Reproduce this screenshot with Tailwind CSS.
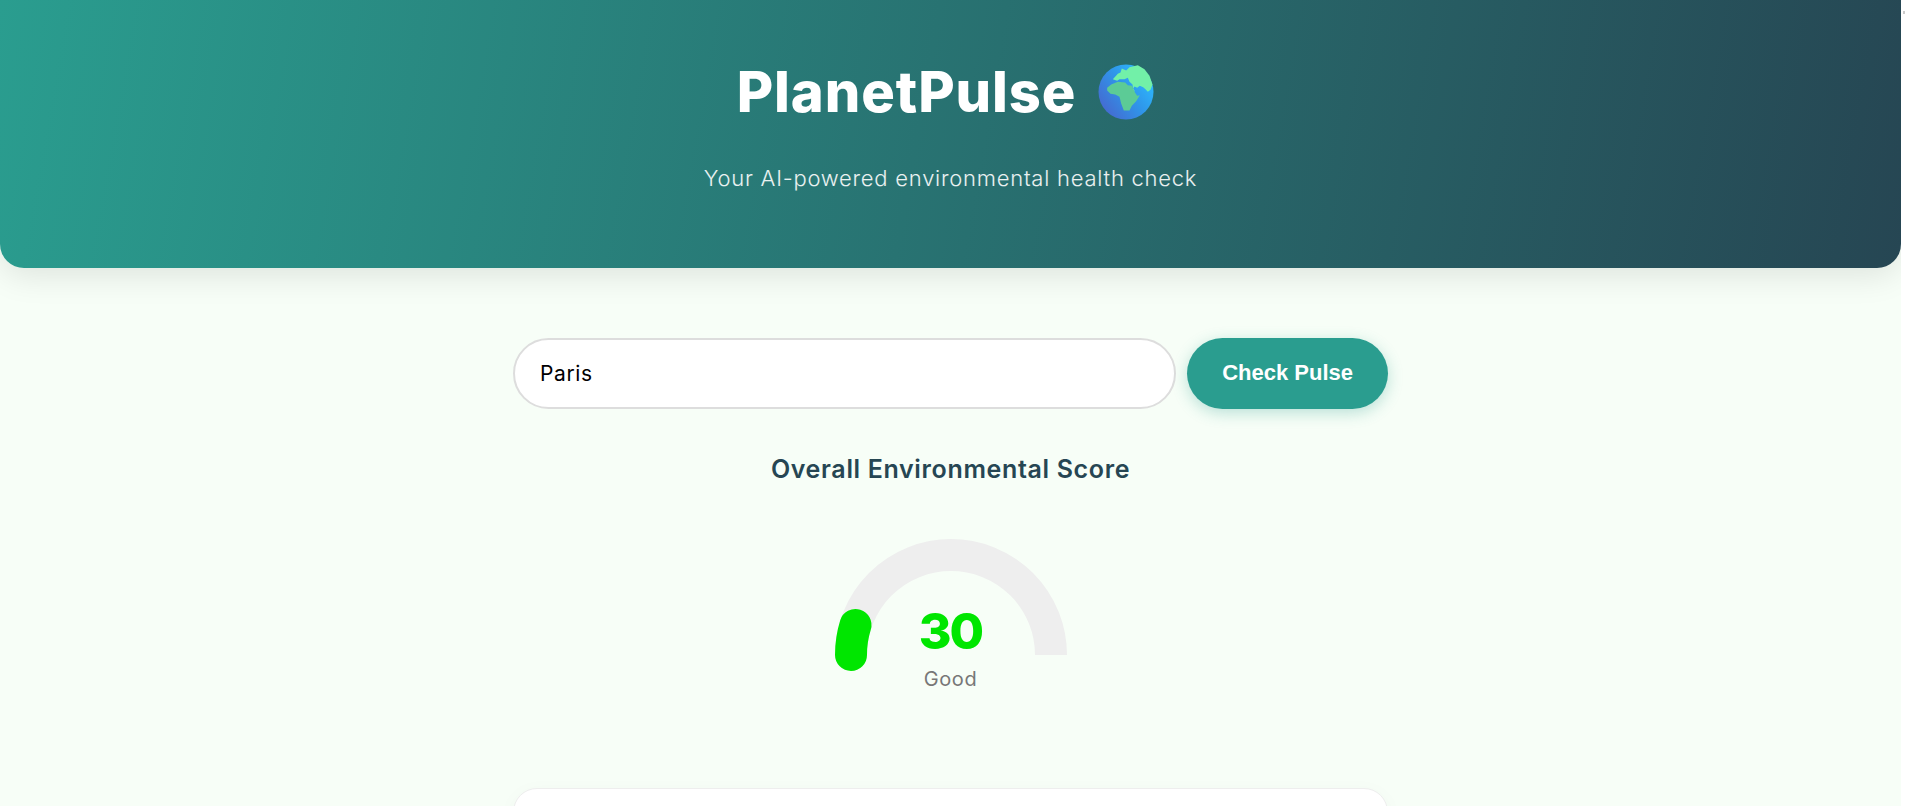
<!DOCTYPE html>
<html lang="en">
<head>
  <meta charset="UTF-8" />
  <title>PlanetPulse</title>
  <script src="https://cdn.jsdelivr.net/npm/@tailwindcss/browser@4"></script>
</head>
<body class="h-[806px] overflow-hidden bg-white font-['Inter',sans-serif] text-[#264653]">
<div class="flex h-[806px]">
  <div class="h-full w-[1901px] overflow-hidden bg-[#f7fef7]">

    <!-- Header -->
    <header class="h-[268px] rounded-b-[24px] bg-[linear-gradient(100deg,#2a9d8f,#264653)] pt-[56px] text-center text-white shadow-[0_8px_32px_rgba(0,0,0,0.1)]">
      <h1 class="flex items-center justify-center gap-[22px] pr-[10px] text-[56px] leading-[72px] font-extrabold tracking-[0.9px]">
        <span>PlanetPulse</span>
        <svg class="h-[56px] w-[56px]" viewBox="0 0 56 56">
          <defs>
            <linearGradient id="sea" x1="0.1" y1="0.9" x2="0.9" y2="0.3">
              <stop offset="0" stop-color="#4668cf" />
              <stop offset="0.6" stop-color="#2f96ea" />
              <stop offset="1" stop-color="#2db4fb" />
            </linearGradient>
          </defs>
          <circle cx="28" cy="28" r="27.5" fill="url(#sea)" />
          <g transform="translate(-13.500 -15.500) scale(0.3333)">
            <path fill="#72f0a8" d="M85 92L100 76L108 72L112 60L125 66L135 56L160 50L180 62L195 82L204 108L198 124L190 130L183 122L176 116L166 112L158 118L150 114L146 120L152 130L146 126L144 108L135 100L130 88L120 92L105 92L98 97Z" />
            <path fill="#5ccb96" d="M68 118L80 108L100 100L122 102L130 110L142 112L150 130L158 142L166 140L155 158L142 172L135 186L118 186L110 165L105 145L92 138L78 136L68 126Z" />
          </g>
        </svg>
      </h1>
      <p class="mt-[34px] text-[22px] leading-[32px] font-light tracking-[0.75px] text-white/90">Your AI-powered environmental health check</p>
    </header>

    <main class="mx-auto w-[875px]">
      <!-- Search -->
      <div class="mt-[70px] flex gap-[11px]">
        <input value="Paris" class="h-[71px] w-[664px] rounded-full border-2 border-[#ddd] bg-white px-[25px] text-[21px] tracking-[0.6px] text-black outline-none" />
        <button class="h-[71px] w-[201px] rounded-full bg-[#2a9d8f] pb-[2px] font-['Liberation_Sans',sans-serif] text-[22px] font-bold text-white shadow-[0_4px_15px_rgba(42,157,143,0.3)]">Check Pulse</button>
      </div>

      <!-- Score -->
      <h2 class="mt-[42px] text-center text-[25px] leading-[36px] font-semibold tracking-[0.65px]">Overall Environmental Score</h2>
      <div class="relative mx-auto mt-[52px] h-[180px] w-[260px]">
        <svg class="absolute top-0 left-0" width="260" height="180" viewBox="0 0 260 180">
          <path d="M30 116A100 100 0 0 1 230 116" fill="none" stroke="#eeeeee" stroke-width="32" />
          <path d="M30 116A100 100 0 0 1 34.500 86" fill="none" stroke="#00e600" stroke-width="32" stroke-linecap="round" />
        </svg>
        <div class="absolute top-[62px] left-0 w-full text-center text-[50px] leading-[60px] font-extrabold tracking-[-2px] text-[#00e600]">30</div>
        <div class="absolute top-[125px] left-0 w-full text-center text-[20px] leading-[30px] tracking-[0.6px] text-[#777]">Good</div>
      </div>

      <!-- Card below the fold -->
      <div class="mt-[69px] h-[200px] rounded-[24px] border border-[#eee] bg-white shadow-[0_4px_20px_rgba(0,0,0,0.03)]"></div>
    </main>
  </div>

  <!-- Scrollbar strip -->
  <div class="w-[4px] bg-white pt-[11px] pl-[2px]">
    <div class="h-[3px] w-[2px] bg-[#ccc]"></div>
  </div>
</div>
</body>
</html>
